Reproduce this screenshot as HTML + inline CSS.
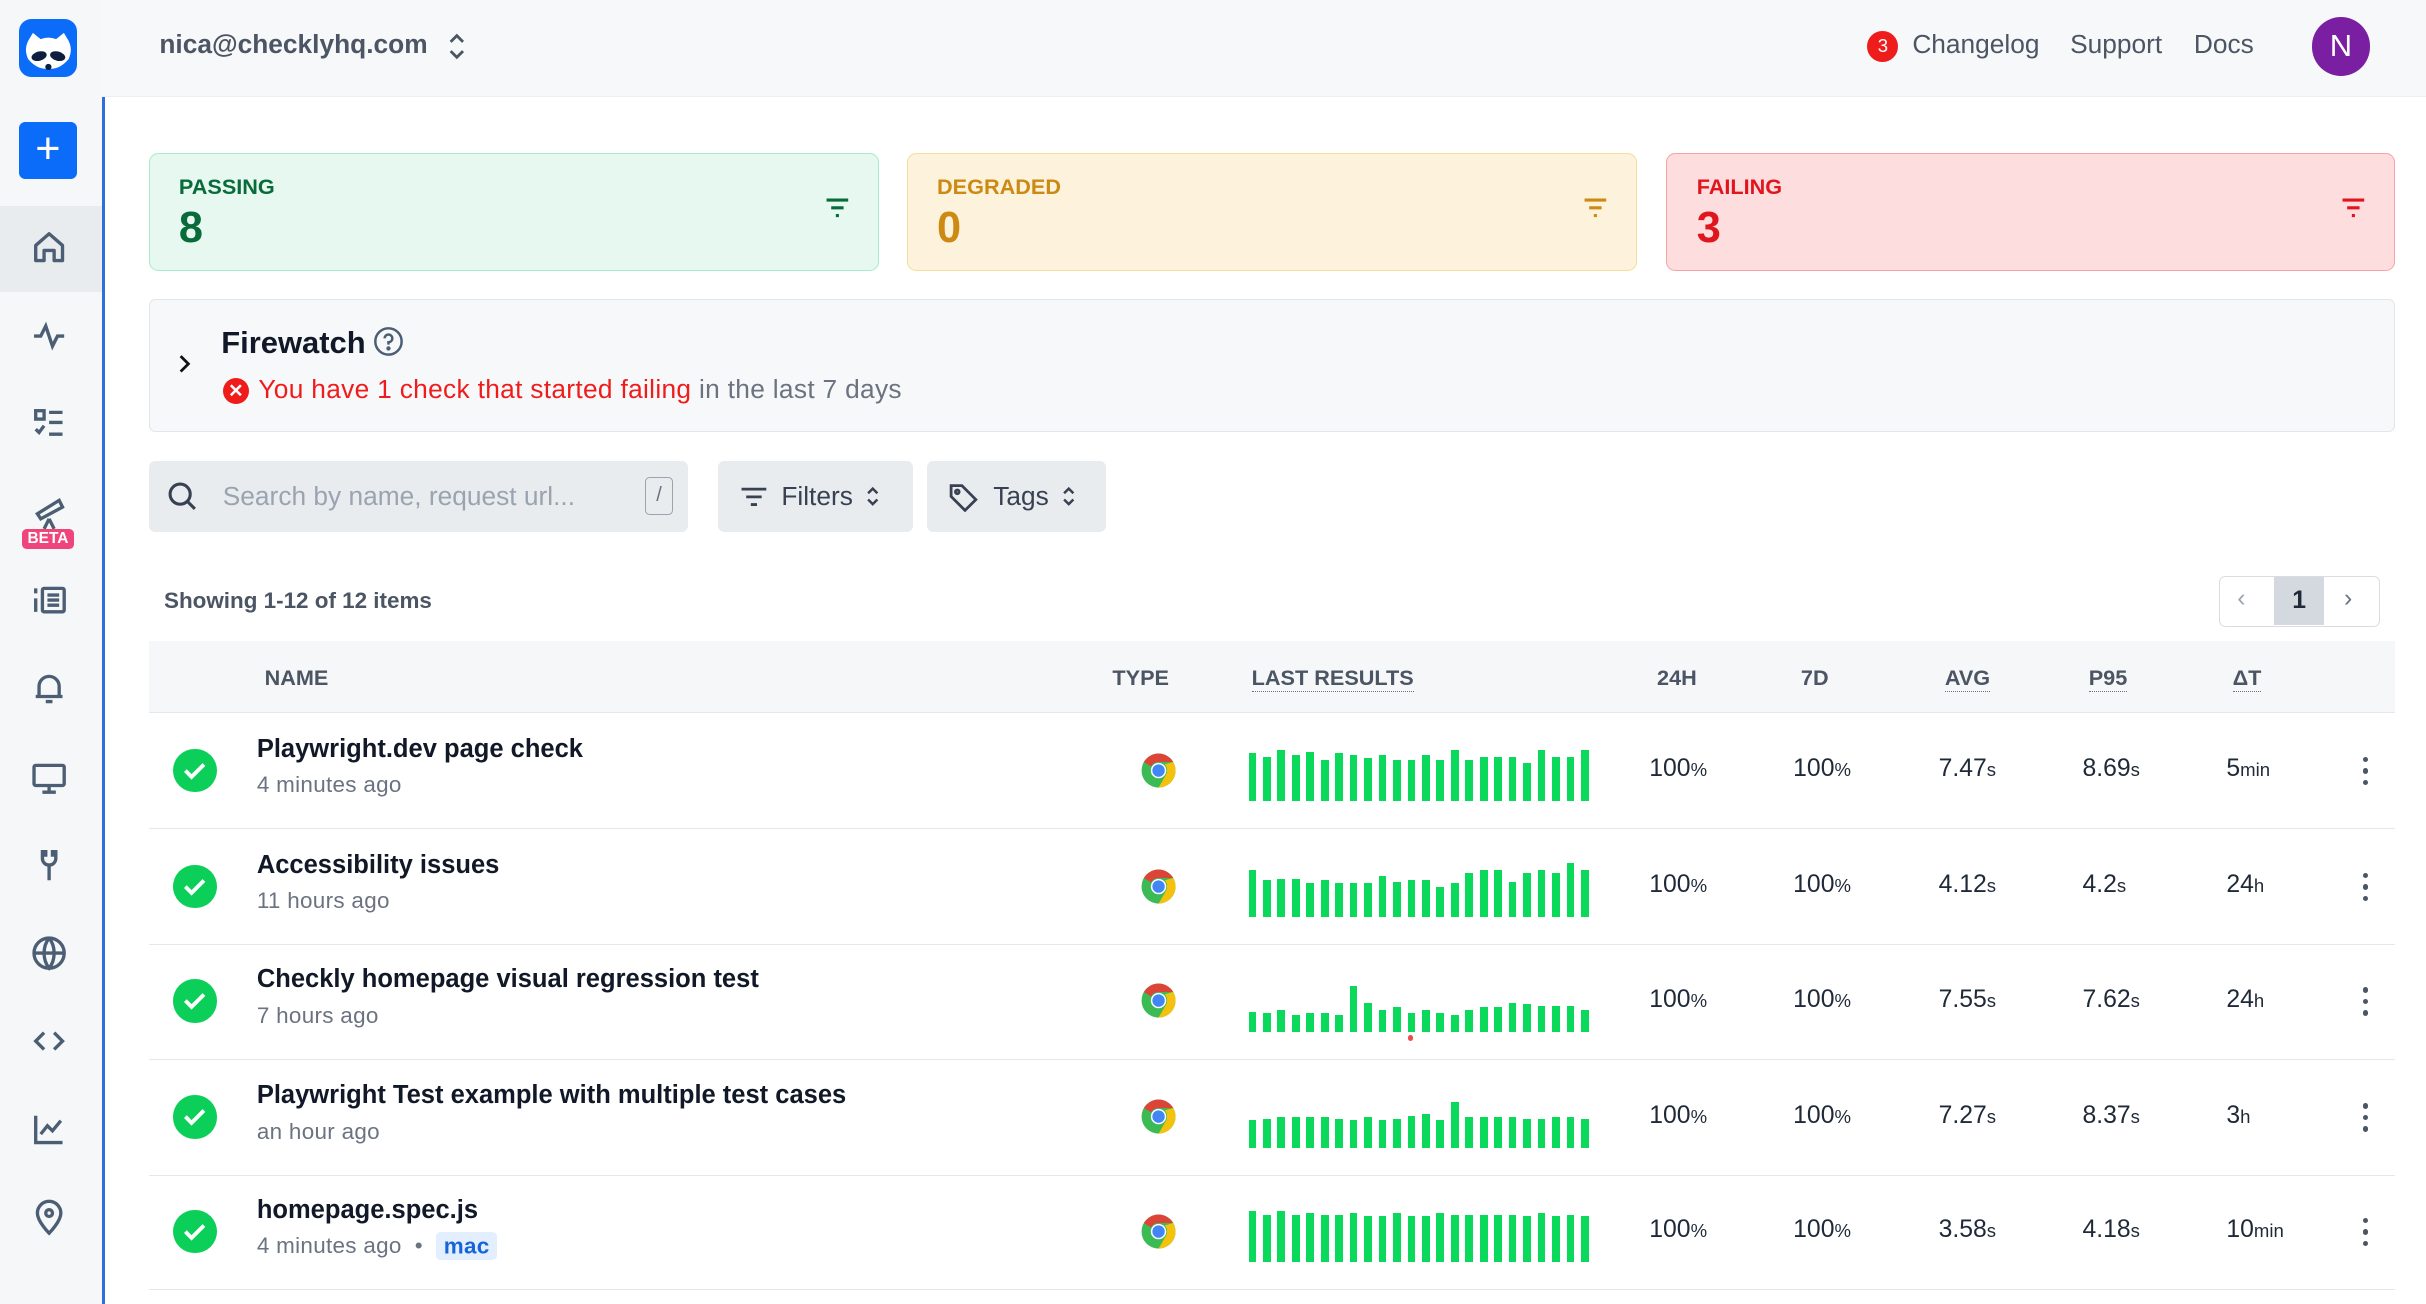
<!DOCTYPE html>
<html><head><meta charset="utf-8"><style>
*{box-sizing:border-box;margin:0;padding:0}
html,body{width:2426px;height:1304px;overflow:hidden;background:#fff}
#w{zoom:1.54719;width:1568px;height:843px;position:relative;font-family:"Liberation Sans",sans-serif;color:#1f2937}
.a{position:absolute}
.sb{left:0;top:0;width:66px;height:843px;background:#f6f7f9}
.bl{left:66px;top:63px;width:2px;height:780px;background:#2f6fdc}
.top{left:66px;top:0;width:1502px;height:63px;background:#f7f8fa;border-bottom:1px solid #eceef1}
.ic{left:19px;width:26px;height:26px}
.card{top:99px;height:76px;width:472px;border-radius:6px;border:1px solid}
.card .l{position:absolute;left:19px;top:13px;font-size:14px;font-weight:bold}
.card .n{position:absolute;left:19px;top:32px;font-size:28px;font-weight:bold}
.card svg{position:absolute;right:18px;top:28px}
.btn{top:298px;height:46px;background:#e9ecef;border-radius:4px;font-size:17px;color:#374151;display:flex;align-items:center}
.th{font-size:14px;font-weight:bold;color:#4b5563;top:430px}
.dot{border-bottom:1px dotted #6b7280}
.row{left:96px;width:1452px;height:75px;border-bottom:1px solid #e5e7eb}
.ok{position:absolute;left:16px;top:23px;width:28px;height:28px;border-radius:50%;background:#0ccf5a}
.nm{position:absolute;left:70px;top:14px;font-size:16.5px;font-weight:bold;color:#111827}
.sub{position:absolute;left:70px;top:38px;font-size:14.5px;color:#6b7280;letter-spacing:.2px}
.chr{position:absolute;left:641px;top:25px}
.bars{position:absolute;left:711px;top:20px;height:37px;display:flex;align-items:flex-end;gap:4.35px}
.bars i{display:block;width:5px;background:#0ad95c}
.v{position:absolute;top:27px;font-size:16px;color:#1f2937}
.v small{font-size:12px}
.dd{position:absolute;left:1431px;top:28px;width:4px}
.dd b{display:block;width:3.5px;height:3.5px;border-radius:50%;background:#4b5563;margin-bottom:4px}
</style></head><body><div id="w">
<div class="a sb"></div>
<div class="a top"></div>
<div class="a bl"></div>
<div class="a" style="left:12px;top:12px;width:38px;height:38px;border-radius:8px;background:#0b6cf9;overflow:hidden">
<svg width="38" height="38" viewBox="0 0 38 38"><path d="M6 14 L9 9 L14 13 Q19 11 24 13 L29 9 L32 14 Q35 20 32 26 Q26 33 19 32 Q12 33 6 26 Q3 20 6 14Z" fill="#fff"/><ellipse cx="13" cy="24" rx="5" ry="3" fill="#0e1e3e" transform="rotate(-15 13 24)"/><ellipse cx="25" cy="24" rx="5" ry="3" fill="#0e1e3e" transform="rotate(15 25 24)"/><circle cx="19" cy="31" r="2" fill="#0e1e3e"/></svg></div>
<div class="a" style="left:12px;top:79px;width:38px;height:37px;border-radius:4px;background:#0b6cf9;color:#fff;font-size:28px;text-align:center;line-height:35px">+</div>
<div class="a" style="left:0;top:133px;width:66px;height:56px;background:#e9ecef"></div>
<svg class="a ic" style="top:147px" viewBox="0 0 24 24" fill="none" stroke="#4b5e73" stroke-width="2"><path d="M4 11 L12 4 L20 11 V20 H15 V14 H9 V20 H4Z" stroke-linejoin="round"/></svg>
<svg class="a ic" style="top:204px" viewBox="0 0 24 24" fill="none" stroke="#4b5e73" stroke-width="2"><path d="M3 12H7L10 6L14 18L17 12H21"/></svg>
<svg class="a ic" style="top:261px" viewBox="0 0 24 24" fill="none" stroke="#4b5e73" stroke-width="2"><rect x="4" y="4" width="5" height="5"/><path d="M4 15L6 17L9 13M12 5H20M12 11H20M12 18H20"/></svg>
<svg class="a ic" style="top:318px" viewBox="0 0 24 24" fill="none" stroke="#4b5e73" stroke-width="2"><path d="M5 13L18 5L20 9L7 16Z M12 16L9 22M12 16L15 22"/></svg>
<div class="a" style="left:14px;top:342px;width:34px;height:13px;background:#f0457c;border-radius:3px;color:#fff;font-size:10px;font-weight:bold;text-align:center;line-height:13px">BETA</div>
<svg class="a ic" style="top:375px" viewBox="0 0 24 24" fill="none" stroke="#4b5e73" stroke-width="2"><rect x="8" y="5" width="13" height="14" rx="1"/><path d="M11 9H18M11 12H18M11 15H18M4 5V8M4 11V19"/></svg>
<svg class="a ic" style="top:432px" viewBox="0 0 24 24" fill="none" stroke="#4b5e73" stroke-width="2"><path d="M6 17V11A6 6 0 0 1 18 11V17H6ZM4 17H20M10 20H14"/></svg>
<svg class="a ic" style="top:489px" viewBox="0 0 24 24" fill="none" stroke="#4b5e73" stroke-width="2"><rect x="3" y="5" width="18" height="12" rx="1"/><path d="M12 17V21M8 21H16"/></svg>
<svg class="a ic" style="top:546px" viewBox="0 0 24 24" fill="none" stroke="#4b5e73" stroke-width="2"><path d="M8 3V8A4 4 0 0 0 16 8V3M12 12V21M10 3V7M14 3V7"/></svg>
<svg class="a ic" style="top:603px" viewBox="0 0 24 24" fill="none" stroke="#4b5e73" stroke-width="2"><circle cx="12" cy="12" r="9"/><path d="M3 12H21M12 3C8 8 8 16 12 21C16 16 16 8 12 3"/></svg>
<svg class="a ic" style="top:660px" viewBox="0 0 24 24" fill="none" stroke="#4b5e73" stroke-width="2"><path d="M9 7L4 12L9 17M15 7L20 12L15 17"/></svg>
<svg class="a ic" style="top:717px" viewBox="0 0 24 24" fill="none" stroke="#4b5e73" stroke-width="2"><path d="M4 4V20H20M7 15L11 10L14 13L19 7"/></svg>
<svg class="a ic" style="top:774px" viewBox="0 0 24 24" fill="none" stroke="#4b5e73" stroke-width="2"><path d="M12 21C12 21 5 14 5 9A7 7 0 0 1 19 9C19 14 12 21 12 21Z"/><circle cx="12" cy="9" r="2"/></svg>
<div class="a" style="left:103px;top:19px;font-size:17px;color:#4b5563;font-weight:bold">nica@checklyhq.com</div>
<svg class="a" style="left:288px;top:20px" width="14" height="20" viewBox="0 0 14 20" fill="none" stroke="#4b5563" stroke-width="1.8"><path d="M3 7L7 3L11 7M3 13L7 17L11 13"/></svg>
<div class="a" style="left:1207px;top:20px;width:20px;height:20px;border-radius:50%;background:#ef1c1c;color:#fff;font-size:12px;text-align:center;line-height:20px">3</div>
<div class="a" style="left:1236px;top:19px;font-size:17px;color:#4b5563">Changelog</div>
<div class="a" style="left:1338px;top:19px;font-size:17px;color:#4b5563">Support</div>
<div class="a" style="left:1418px;top:19px;font-size:17px;color:#4b5563">Docs</div>
<div class="a" style="left:1494px;top:11px;width:38px;height:38px;border-radius:50%;background:#7b1fa2;color:#fff;font-size:20px;text-align:center;line-height:38px">N</div>
<div class="a card" style="left:96px;background:#e7f8f0;border-color:#a8ebcb;color:#096b3a"><div class="l">PASSING</div><div class="n">8</div><svg width="16" height="14" stroke="#096b3a" stroke-width="2"><path d="M1 2H15M4 7H12M7 12H9"/></svg></div>
<div class="a card" style="left:586px;background:#fdf3dc;border-color:#f5dd9d;color:#cc8a12"><div class="l">DEGRADED</div><div class="n">0</div><svg width="16" height="14" stroke="#cc8a12" stroke-width="2"><path d="M1 2H15M4 7H12M7 12H9"/></svg></div>
<div class="a card" style="left:1077px;width:471px;background:#fddddd;border-color:#f6a3a3;color:#e0161e"><div class="l">FAILING</div><div class="n">3</div><svg width="16" height="14" stroke="#e0161e" stroke-width="2"><path d="M1 2H15M4 7H12M7 12H9"/></svg></div>
<div class="a" style="left:96px;top:193px;width:1452px;height:86px;background:#f7f8fa;border:1px solid #e2e5e9;border-radius:4px"></div>
<svg class="a" style="left:114px;top:228px" width="12" height="14" fill="none" stroke="#111" stroke-width="1.8"><path d="M3 2L8 7L3 12"/></svg>
<div class="a" style="left:143px;top:210px;font-size:20px;font-weight:bold;color:#111827">Firewatch</div>
<svg class="a" style="left:241px;top:211px" width="20" height="20" fill="none" stroke="#4b5e73" stroke-width="1.6"><circle cx="10" cy="10" r="8.5"/><path d="M7.5 8A2.5 2.5 0 1 1 10 10.5V12"/><circle cx="10" cy="14.5" r=".6" fill="#4b5e73"/></svg>
<div class="a" style="left:144px;top:244px;width:17px;height:17px;border-radius:50%;background:#ef1c1c;color:#fff;font-size:12px;text-align:center;line-height:17px;font-weight:bold">✕</div>
<div class="a" style="left:167px;top:242px;font-size:17px;color:#6b7280;letter-spacing:.2px"><span style="color:#ef1c1c">You have 1 check that started failing</span> in the last 7 days</div>
<div class="a btn" style="left:96px;width:349px"><svg style="margin-left:12px" width="20" height="20" fill="none" stroke="#374151" stroke-width="2"><circle cx="8.5" cy="8.5" r="6.5"/><path d="M13 13L18 18"/></svg><span style="margin-left:16px;color:#9aa3af">Search by name, request url...</span><span style="position:absolute;right:10px;top:10px;width:18px;height:25px;border:1px solid #9ca3af;border-radius:3px;font-size:13px;color:#6b7280;text-align:center;line-height:23px">/</span></div>
<div class="a btn" style="left:464px;width:126px"><svg style="margin-left:14px" width="18" height="14" fill="none" stroke="#374151" stroke-width="1.8"><path d="M1 2H17M4 7H14M7 12H11"/></svg><span style="margin-left:9px">Filters</span><svg style="margin-left:8px" width="10" height="16" fill="none" stroke="#374151" stroke-width="1.6"><path d="M2 6L5 3L8 6M2 10L5 13L8 10"/></svg></div>
<div class="a btn" style="left:599px;width:116px"><svg style="margin-left:14px" width="20" height="20" fill="none" stroke="#374151" stroke-width="1.8"><path d="M2 3V10L11 19L18 12L9 3Z"/><circle cx="6" cy="7" r="1.2"/></svg><span style="margin-left:9px">Tags</span><svg style="margin-left:8px" width="10" height="16" fill="none" stroke="#374151" stroke-width="1.6"><path d="M2 6L5 3L8 6M2 10L5 13L8 10"/></svg></div>
<div class="a" style="left:106px;top:380px;font-size:14.5px;font-weight:bold;color:#4b5563">Showing 1-12 of 12 items</div>
<div class="a" style="left:1434px;top:372px;width:104px;height:33px;border:1px solid #d9dde2;border-radius:4px;background:#fff"></div>
<div class="a" style="left:1470px;top:373px;width:32px;height:31px;background:#d4d9e0;font-size:16px;font-weight:bold;text-align:center;line-height:31px">1</div>
<div class="a" style="left:1446px;top:378px;color:#9ca3af;font-size:16px">‹</div>
<div class="a" style="left:1515px;top:378px;color:#6b7280;font-size:16px">›</div>
<div class="a" style="left:96px;top:414px;width:1452px;height:47px;background:#f6f7f9;border-bottom:1px solid #e5e7eb"></div>
<div class="a th" style="left:171px">NAME</div>
<div class="a th" style="left:719px">TYPE</div>
<div class="a th dot" style="left:809px">LAST RESULTS</div>
<div class="a th" style="left:1071px">24H</div>
<div class="a th" style="left:1164px">7D</div>
<div class="a th dot" style="left:1257px">AVG</div>
<div class="a th dot" style="left:1350px">P95</div>
<div class="a th dot" style="left:1443px">ΔT</div>

<svg width="0" height="0" style="position:absolute"><defs><symbol id="ch" viewBox="0 0 24 24"><circle cx="12" cy="12" r="11" fill="#3cba54"/><path d="M12 1A11 11 0 0 1 21.5 6.5H12A5.5 5.5 0 0 0 7.2 9.3L2.5 6.5A11 11 0 0 1 12 1Z" fill="#db4437"/><path d="M21.5 6.5A11 11 0 0 1 12 23L16.8 14.7A5.5 5.5 0 0 0 17.5 12 5.5 5.5 0 0 0 16 8Z" fill="#f4c20d"/><circle cx="12" cy="12" r="5" fill="#fff"/><circle cx="12" cy="12" r="4" fill="#4285f4"/></symbol><symbol id="ck" viewBox="0 0 28 28"><path d="M8 14L12 18L20 10" fill="none" stroke="#fff" stroke-width="2.5"/></symbol></defs></svg>

<div class="a row" style="top:461px"><div class="ok"><svg width="28" height="28"><use href="#ck"/></svg></div><div class="nm">Playwright.dev page check</div><div class="sub">4 minutes ago</div><svg class="chr" width="24" height="24"><use href="#ch"/></svg>
<div class="bars"><i style="height:31px"></i><i style="height:29px"></i><i style="height:33px"></i><i style="height:30px"></i><i style="height:32px"></i><i style="height:27px"></i><i style="height:31px"></i><i style="height:30px"></i><i style="height:28px"></i><i style="height:30px"></i><i style="height:27px"></i><i style="height:27px"></i><i style="height:30px"></i><i style="height:27px"></i><i style="height:33px"></i><i style="height:27px"></i><i style="height:29px"></i><i style="height:29px"></i><i style="height:29px"></i><i style="height:25px"></i><i style="height:33px"></i><i style="height:29px"></i><i style="height:29px"></i><i style="height:33px"></i></div>
<div class="v" style="left:970px">100<small>%</small></div><div class="v" style="left:1063px">100<small>%</small></div><div class="v" style="left:1157px">7.47<small>s</small></div><div class="v" style="left:1250px">8.69<small>s</small></div><div class="v" style="left:1343px">5<small>min</small></div><div class="dd"><b></b><b></b><b></b></div></div>

<div class="a row" style="top:536px"><div class="ok"><svg width="28" height="28"><use href="#ck"/></svg></div><div class="nm">Accessibility issues</div><div class="sub">11 hours ago</div><svg class="chr" width="24" height="24"><use href="#ch"/></svg>
<div class="bars"><i style="height:31px"></i><i style="height:24px"></i><i style="height:25px"></i><i style="height:25px"></i><i style="height:22px"></i><i style="height:24px"></i><i style="height:22px"></i><i style="height:22px"></i><i style="height:22px"></i><i style="height:27px"></i><i style="height:23px"></i><i style="height:24px"></i><i style="height:24px"></i><i style="height:20px"></i><i style="height:22px"></i><i style="height:29px"></i><i style="height:31px"></i><i style="height:31px"></i><i style="height:23px"></i><i style="height:29px"></i><i style="height:31px"></i><i style="height:29px"></i><i style="height:35px"></i><i style="height:31px"></i></div>
<div class="v" style="left:970px">100<small>%</small></div><div class="v" style="left:1063px">100<small>%</small></div><div class="v" style="left:1157px">4.12<small>s</small></div><div class="v" style="left:1250px">4.2<small>s</small></div><div class="v" style="left:1343px">24<small>h</small></div><div class="dd"><b></b><b></b><b></b></div></div>

<div class="a row" style="top:610px"><div class="ok"><svg width="28" height="28"><use href="#ck"/></svg></div><div class="nm">Checkly homepage visual regression test</div><div class="sub">7 hours ago</div><svg class="chr" width="24" height="24"><use href="#ch"/></svg>
<div class="bars"><i style="height:13px"></i><i style="height:12px"></i><i style="height:14px"></i><i style="height:11px"></i><i style="height:12px"></i><i style="height:12px"></i><i style="height:11px"></i><i style="height:30px"></i><i style="height:19px"></i><i style="height:14px"></i><i style="height:16px"></i><i style="height:12px"></i><i style="height:14px"></i><i style="height:12px"></i><i style="height:11px"></i><i style="height:14px"></i><i style="height:16px"></i><i style="height:16px"></i><i style="height:19px"></i><i style="height:18px"></i><i style="height:17px"></i><i style="height:17px"></i><i style="height:17px"></i><i style="height:14px"></i></div>
<div class="a" style="left:814px;top:59px;width:3px;height:4px;border-radius:2px;background:#f04b4b"></div>
<div class="v" style="left:970px">100<small>%</small></div><div class="v" style="left:1063px">100<small>%</small></div><div class="v" style="left:1157px">7.55<small>s</small></div><div class="v" style="left:1250px">7.62<small>s</small></div><div class="v" style="left:1343px">24<small>h</small></div><div class="dd"><b></b><b></b><b></b></div></div>

<div class="a row" style="top:685px"><div class="ok"><svg width="28" height="28"><use href="#ck"/></svg></div><div class="nm">Playwright Test example with multiple test cases</div><div class="sub">an hour ago</div><svg class="chr" width="24" height="24"><use href="#ch"/></svg>
<div class="bars"><i style="height:18px"></i><i style="height:19px"></i><i style="height:20px"></i><i style="height:20px"></i><i style="height:20px"></i><i style="height:20px"></i><i style="height:19px"></i><i style="height:18px"></i><i style="height:20px"></i><i style="height:18px"></i><i style="height:19px"></i><i style="height:21px"></i><i style="height:22px"></i><i style="height:18px"></i><i style="height:30px"></i><i style="height:20px"></i><i style="height:20px"></i><i style="height:20px"></i><i style="height:20px"></i><i style="height:19px"></i><i style="height:19px"></i><i style="height:20px"></i><i style="height:20px"></i><i style="height:19px"></i></div>
<div class="v" style="left:970px">100<small>%</small></div><div class="v" style="left:1063px">100<small>%</small></div><div class="v" style="left:1157px">7.27<small>s</small></div><div class="v" style="left:1250px">8.37<small>s</small></div><div class="v" style="left:1343px">3<small>h</small></div><div class="dd"><b></b><b></b><b></b></div></div>

<div class="a row" style="top:759px"><div class="ok"><svg width="28" height="28"><use href="#ck"/></svg></div><div class="nm">homepage.spec.js</div><div class="sub">4 minutes ago &nbsp;•&nbsp; <span style="background:#e3efff;color:#1565d8;font-weight:bold;padding:1px 5px;border-radius:3px">mac</span></div><svg class="chr" width="24" height="24"><use href="#ch"/></svg>
<div class="bars"><i style="height:33px"></i><i style="height:31px"></i><i style="height:33px"></i><i style="height:31px"></i><i style="height:32px"></i><i style="height:31px"></i><i style="height:31px"></i><i style="height:32px"></i><i style="height:30px"></i><i style="height:30px"></i><i style="height:32px"></i><i style="height:30px"></i><i style="height:30px"></i><i style="height:32px"></i><i style="height:31px"></i><i style="height:31px"></i><i style="height:31px"></i><i style="height:31px"></i><i style="height:31px"></i><i style="height:30px"></i><i style="height:32px"></i><i style="height:30px"></i><i style="height:31px"></i><i style="height:30px"></i></div>
<div class="v" style="left:970px">100<small>%</small></div><div class="v" style="left:1063px">100<small>%</small></div><div class="v" style="left:1157px">3.58<small>s</small></div><div class="v" style="left:1250px">4.18<small>s</small></div><div class="v" style="left:1343px">10<small>min</small></div><div class="dd"><b></b><b></b><b></b></div></div>
</div></body></html>
